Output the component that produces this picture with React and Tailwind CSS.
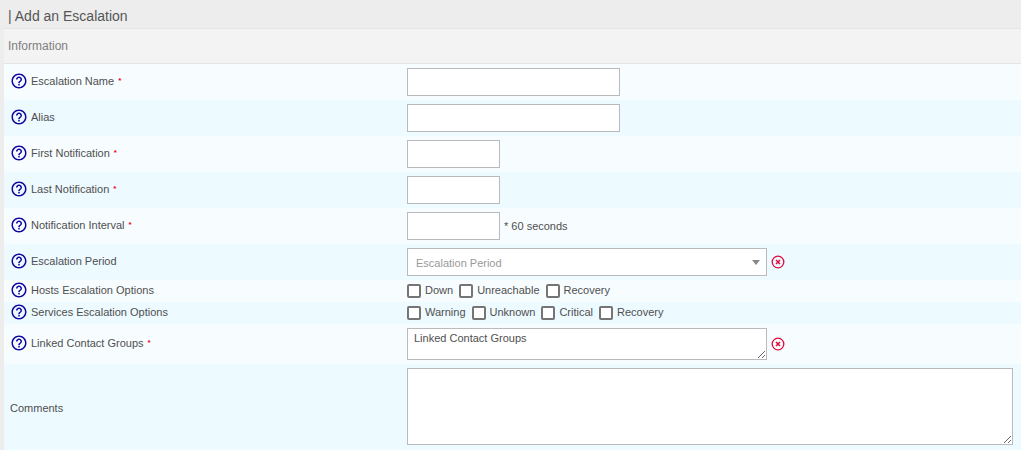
import React from "react";

function HelpIcon() {
  return (
    <svg viewBox="0 0 24 24" className="h-[18px] w-[18px] shrink-0 fill-[#10069f]" aria-hidden="true">
      <path d="M11 18h2v-2h-2v2zm1-16C6.48 2 2 6.48 2 12s4.48 10 10 10 10-4.48 10-10S17.52 2 12 2zm0 18c-4.41 0-8-3.59-8-8s3.59-8 8-8 8 3.59 8 8-3.59 8-8 8zm0-14c-2.21 0-4 1.79-4 4h2c0-1.1.9-2 2-2s2 .9 2 2c0 2-3 1.75-3 5h2c0-2.25 3-2.5 3-5 0-2.21-1.79-4-4-4z" />
    </svg>
  );
}

function ClearButton({ label }) {
  return (
    <button type="button" aria-label={label} className="ml-1 h-[14px] w-[14px] shrink-0">
      <svg viewBox="0 0 14 14" className="h-[14px] w-[14px] fill-none stroke-[#e00b3d]" aria-hidden="true">
        <circle cx="7" cy="7" r="5.8" strokeWidth="1.3" />
        <path d="M5 5l4 4M9 5l-4 4" strokeWidth="1.5" />
      </svg>
    </button>
  );
}

function Row({ id, label, required, group, help = true, className = "py-1", children }) {
  const Label = group ? "span" : "label";
  const labelProps = group ? { id } : { htmlFor: id };
  return (
    <div
      role={group ? "group" : undefined}
      aria-labelledby={group ? id : undefined}
      className={"flex items-center odd:bg-[#f7fdff] even:bg-[#edfaff] " + className}
    >
      <div className={"flex w-[403px] shrink-0 items-center gap-[3px] pl-[6px] " + (help ? "pb-[2px]" : "pt-[2px]")}>
        {help && <HelpIcon />}
        <Label {...labelProps} className="flex items-center">
          {label}
          {required && <span className="ml-1 text-[8px] font-bold text-[#f00020]">*</span>}
        </Label>
      </div>
      <div className="flex min-w-0 flex-1 items-center pr-2">{children}</div>
    </div>
  );
}

const box = "border border-[#b8babe] bg-white outline-none";

function Checks({ name, options }) {
  return (
    <div className="flex items-center gap-[6px]">
      {options.map((option) => (
        <label key={option} className="flex items-center gap-1">
          <input
            type="checkbox"
            name={name}
            className="h-[14px] w-[14px] appearance-none rounded-[2px] border-2 border-[#757575] bg-white checked:bg-[#10069f]"
          />
          <span className="pb-[2px]">{option}</span>
        </label>
      ))}
    </div>
  );
}

export default function App() {
  return (
    <main className="min-h-screen bg-[#ededed] pl-1 font-['Liberation_Sans',Arial,sans-serif] text-[11px] leading-4 text-[#4f4f4f]">
      <h1 className="flex h-7 items-center pl-1 pt-1 text-sm text-[#555]">| Add an Escalation</h1>
      <form>
        <h2 className="flex h-9 items-center border-y border-[#e5e5e5] bg-[#f3f3f3] pl-1 text-xs text-[#808080]">
          Information
        </h2>
        <div>
          <Row id="name" label="Escalation Name" required>
            <input id="name" type="text" className={box + " h-7 w-[213px] px-2"} />
          </Row>
          <Row id="alias" label="Alias">
            <input id="alias" type="text" className={box + " h-7 w-[213px] px-2"} />
          </Row>
          <Row id="first" label="First Notification" required>
            <input id="first" type="text" className={box + " h-7 w-[93px] px-2"} />
          </Row>
          <Row id="last" label="Last Notification" required>
            <input id="last" type="text" className={box + " h-7 w-[93px] px-2"} />
          </Row>
          <Row id="interval" label="Notification Interval" required>
            <input id="interval" type="text" className={box + " h-7 w-[93px] px-2"} />
            <span className="ml-1">* 60 seconds</span>
          </Row>
          <Row id="period" label="Escalation Period">
            <div className="relative w-[360px]">
              <select
                id="period"
                defaultValue=""
                className={box + " block h-7 w-full appearance-none px-2 pt-[2px] text-[#999]"}
              >
                <option value="">Escalation Period</option>
              </select>
              <svg
                viewBox="0 0 8 5"
                className="pointer-events-none absolute right-[7px] top-3 h-[5px] w-2 fill-[#888]"
                aria-hidden="true"
              >
                <path d="M0 0h8L4 5z" />
              </svg>
            </div>
            <ClearButton label="Clear escalation period" />
          </Row>
          <Row id="hosts" label="Hosts Escalation Options" group className="h-[22px]">
            <Checks name="hosts" options={["Down", "Unreachable", "Recovery"]} />
          </Row>
          <Row id="services" label="Services Escalation Options" group className="h-[22px]">
            <Checks name="services" options={["Warning", "Unknown", "Critical", "Recovery"]} />
          </Row>
          <Row id="groups" label="Linked Contact Groups" required>
            <textarea
              id="groups"
              defaultValue="Linked Contact Groups"
              className={box + " block h-8 w-[360px] resize overflow-hidden px-[6px] py-px"}
            />
            <ClearButton label="Clear linked contact groups" />
          </Row>
          <Row id="comments" label="Comments" help={false} className="pb-[5px] pt-1">
            <textarea id="comments" className={box + " block h-[77px] w-full resize px-2 py-1"} />
          </Row>
        </div>
      </form>
    </main>
  );
}
